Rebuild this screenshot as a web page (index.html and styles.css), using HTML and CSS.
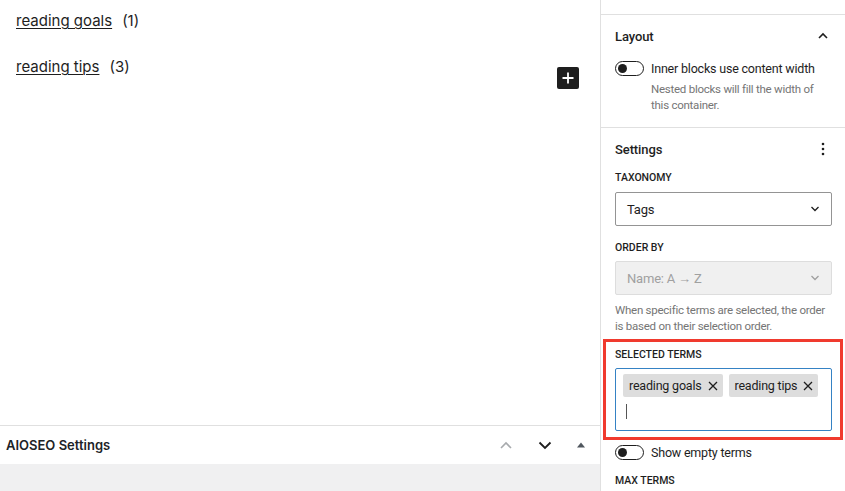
FILE: index.html
```html
<!DOCTYPE html>
<html>
<head>
<meta charset="utf-8">
<link rel="stylesheet" href="styles.css">
</head>
<body>
<div class="app">
  <main class="main">
    <div class="canvas">
      <p class="term"><a href="#">reading goals</a><span class="count">(1)</span></p>
      <div class="term-row">
        <p class="term"><a href="#">reading tips</a><span class="count">(3)</span></p>
        <button class="add" aria-label="Add block">
          <svg width="14" height="14" viewBox="0 0 14 14"><path d="M7 1.5v11M1.5 7h11" stroke="#fff" stroke-width="1.8" fill="none"/></svg>
        </button>
      </div>
    </div>
    <div class="metabox">
      <div class="metabox-head">
        <span class="metabox-title">AIOSEO Settings</span>
        <div class="metabox-actions">
          <svg class="mb-ico" width="16" height="16" viewBox="0 0 16 16"><path d="M3 11l5-5 5 5" stroke="#a7aaad" stroke-width="1.6" fill="none"/></svg>
          <svg class="mb-ico" width="16" height="16" viewBox="0 0 16 16"><path d="M2.5 5.5l5.5 5.5 5.5-5.5" stroke="#1e1e1e" stroke-width="1.8" fill="none"/></svg>
          <svg class="mb-ico" width="10" height="10" viewBox="0 0 10 10"><path d="M1 7.5L5 2.5 9 7.5z" fill="#50575e"/></svg>
        </div>
      </div>
      <div class="metabox-body"></div>
    </div>
  </main>
  <aside class="sidebar">
    <div class="top-stub"></div>
    <section class="panel layout">
      <div class="panel-head">
        <span>Layout</span>
        <svg width="14" height="14" viewBox="0 0 14 14"><path d="M3 9l4-4 4 4" stroke="#1e1e1e" stroke-width="1.6" fill="none"/></svg>
      </div>
      <div class="toggle-row">
        <span class="toggle"><span class="knob"></span></span>
        <span class="toggle-label">Inner blocks use content width</span>
      </div>
      <p class="help indent">Nested blocks will fill the width of this container.</p>
    </section>
    <section class="panel settings">
      <div class="panel-head">
        <span>Settings</span>
        <svg width="14" height="16" viewBox="0 0 14 16"><circle cx="7" cy="3" r="1.3" fill="#1e1e1e"/><circle cx="7" cy="8" r="1.3" fill="#1e1e1e"/><circle cx="7" cy="13" r="1.3" fill="#1e1e1e"/></svg>
      </div>
      <div class="field field-tax">
        <div class="label">Taxonomy</div>
        <div class="select"><span>Tags</span>
          <svg width="10" height="6" viewBox="0 0 10 6"><path d="M1.5 1l3.5 3.5L8.5 1" stroke="#1e1e1e" stroke-width="1.3" fill="none"/></svg>
        </div>
      </div>
      <div class="field field-order">
        <div class="label">Order by</div>
        <div class="select disabled"><span>Name: A → Z</span>
          <svg width="10" height="6" viewBox="0 0 10 6"><path d="M1.5 1l3.5 3.5L8.5 1" stroke="#a0a0a0" stroke-width="1.3" fill="none"/></svg>
        </div>
        <p class="help">When specific terms are selected, the order is based on their selection order.</p>
      </div>
      <div class="highlight">
        <div class="label">Selected terms</div>
        <div class="token-input">
          <div class="tokens">
            <span class="token">reading goals<svg class="x" width="10" height="10" viewBox="0 0 10 10"><path d="M1 1l8 8M9 1l-8 8" stroke="#1e1e1e" stroke-width="1.3"/></svg></span>
            <span class="token">reading tips<svg class="x" width="10" height="10" viewBox="0 0 10 10"><path d="M1 1l8 8M9 1l-8 8" stroke="#1e1e1e" stroke-width="1.3"/></svg></span>
          </div>
          <span class="caret"></span>
        </div>
      </div>
      <div class="toggle-row empty">
        <span class="toggle"><span class="knob"></span></span>
        <span class="toggle-label">Show empty terms</span>
      </div>
      <div class="label max">Max terms</div>
    </section>
  </aside>
</div>
</body>
</html>
```
FILE: styles.css
```css
* { box-sizing: border-box; }
html, body { margin: 0; padding: 0; }
body {
  font-family: Inter, "Noto Sans", sans-serif;
  color: #1e1e1e;
  width: 845px;
  height: 491px;
  overflow: hidden;
  background: #fff;
}
.app { display: flex; height: 491px; }
.main {
  width: 600px;
  flex: none;
  display: flex;
  flex-direction: column;
}
.canvas {
  flex: 1;
  padding: 10px 21px 0 16px;
}
.term {
  margin: 0;
  font-size: 15px;
  line-height: 22px;
}
.term a { color: #1e1e1e; text-decoration: underline; text-underline-offset: 2px; text-decoration-thickness: 1px; }
.count { margin-left: 10px; }
.term-row {
  display: flex;
  justify-content: space-between;
  align-items: flex-start;
  margin-top: 24px;
}
.add {
  width: 22px; height: 22px;
  margin-top: 11px;
  border: 0;
  border-radius: 2px;
  background: #1e1e1e;
  padding: 0;
  display: flex; align-items: center; justify-content: center;
}
.metabox { border-top: 1px solid #e0e0e0; }
.metabox-head {
  height: 38px;
  display: flex;
  align-items: center;
  justify-content: space-between;
  padding: 0 14px 0 6px;
  background: #fff;
}
.metabox-title { font-size: 13px; font-weight: 600; color: #1d2327; }
.metabox-actions { display: flex; align-items: center; gap: 23px; }
.metabox-body { height: 27px; background: #f0f0f1; }

.sidebar {
  width: 245px;
  flex: none;
  border-left: 1px solid #e0e0e0;
  font-family: Roboto, "Liberation Sans", sans-serif;
  font-size: 12.5px;
  letter-spacing: -0.2px;
}
.top-stub { height: 15px; border-bottom: 1px solid #e0e0e0; }
.panel { padding: 0 13px 0 14px; border-bottom: 1px solid #e0e0e0; }
.panel-head {
  display: flex;
  justify-content: space-between;
  align-items: center;
  height: 42px;
  font-size: 13px;
  letter-spacing: -0.1px;
  font-weight: 500;
  padding-right: 2px;
}
.layout { padding-bottom: 14px; }
.toggle-row { display: flex; align-items: center; gap: 7px; margin-top: 4px; }
.toggle {
  width: 29px; height: 15px;
  border: 1px solid #1e1e1e;
  border-radius: 8px;
  position: relative;
  flex: none;
}
.knob {
  position: absolute; left: 2px; top: 2px;
  width: 9px; height: 9px; border-radius: 50%;
  background: #1e1e1e;
}
.toggle-label { font-size: 12.5px; white-space: nowrap; }
.help {
  margin: 5px 0 0;
  font-size: 11.5px;
  letter-spacing: -0.25px;
  line-height: 16px;
  color: #757575;
}
.help.indent { padding-left: 36px; }
.settings { border-bottom: 0; }
.label {
  font-size: 10.5px;
  font-weight: 500;
  text-transform: uppercase;
  letter-spacing: 0;
  line-height: 12px;
  margin-bottom: 9px;
}
.field-tax .label { margin-top: 2px; margin-bottom: 8px; }
.field-tax { margin-bottom: 16px; }
.field-order .label { margin-top: 2px; margin-bottom: 7px; }
.select {
  height: 34px;
  border: 1px solid #949494;
  border-radius: 2px;
  display: flex; align-items: center; justify-content: space-between;
  padding: 0 11px 0 11px;
  font-size: 13px;
}
.select.disabled { background: #f0f0f0; border-color: #ddd; color: #a0a0a0; }
.field-order .help { margin-top: 7px; }
.highlight {
  margin: 5px -11px 0 -12px;
  border: 3px solid #f03a2e;
  padding: 7px 8px 6px 9px;
}
.highlight .label { margin-bottom: 7px; }
.token-input {
  border: 1px solid #3582c4;
  border-radius: 2px;
  height: 63px;
  padding: 5px 7px;
}
.tokens { display: flex; gap: 6px; }
.token {
  flex: none;
  white-space: nowrap;
  background: #ddd;
  border-radius: 2px;
  height: 23px;
  display: inline-flex; align-items: center;
  padding: 0 5px 0 6px;
  font-size: 12.5px;
  color: #1e1e1e;
}
.x { margin-left: 6px; }
.caret { display: block; width: 1px; height: 15px; background: #555; margin: 7px 0 0 3px; }
.toggle-row.empty { margin-top: 5px; }
.label.max { margin-top: 15px; }
```
